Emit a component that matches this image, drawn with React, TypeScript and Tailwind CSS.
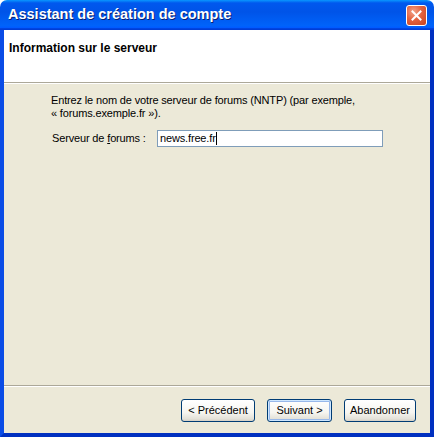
import { FC } from "react";

const XpButton: FC<{ label: string; width: string; focused?: boolean }> = ({
  label,
  width,
  focused,
}) => {
  return (
    <button
      className={`${width} h-[23px] rounded-[3px] border border-[#003c74] bg-[linear-gradient(to_bottom,#ffffff_0%,#f6f5f0_60%,#e3e1d8_90%,#d6d0c5_100%)] text-[11px] text-black flex items-center justify-center ${
        focused ? "shadow-[inset_0_0_0_1px_#cee7ff,inset_0_0_0_2px_#98b8ea]" : ""
      }`}
    >
      {label}
    </button>
  );
};

const Separator: FC = () => (
  <div className="flex flex-col">
    <div className="h-px bg-[#aca899]" />
    <div className="h-px bg-white" />
  </div>
);

export default function App() {
  return (
    <div className="w-[434px] h-[437px] flex flex-col bg-white font-['Liberation_Sans',Arial,sans-serif] text-[11px] text-black">
      {/* title bar */}
      <div className="h-[30px] shrink-0 rounded-t-[7px] bg-[linear-gradient(to_bottom,#0997ff_0%,#0058ee_10%,#0054e8_40%,#0063fa_85%,#005bff_92%,#003dd7_96%,#003dd7_100%)] flex items-center justify-between pl-[8px] pr-[7px]">
        <span className="text-white font-bold text-[14.5px] [text-shadow:1px_1px_0_#0a1f6e]">
          Assistant de création de compte
        </span>
        <div className="w-[21px] h-[21px] rounded-[3px] border border-white bg-[radial-gradient(circle_at_35%_30%,#f2a48a_0%,#e3623f_45%,#c8431f_100%)] flex items-center justify-center">
          <svg width="11" height="11" viewBox="0 0 11 11">
            <path d="M1.5 1.5 L9.5 9.5 M9.5 1.5 L1.5 9.5" stroke="white" strokeWidth="2" strokeLinecap="square" />
          </svg>
        </div>
      </div>

      {/* window frame */}
      <div className="flex-1 flex flex-col border-x-4 border-b-4 border-[#0842d6] border-l-[#0a4ce6] border-r-[#0030c0] border-b-[#0030c0]">
        {/* header */}
        <div className="h-[52px] shrink-0 bg-white pl-[5px] pt-[9px]">
          <span className="font-bold text-[12px]">Information sur le serveur</span>
        </div>
        <Separator />

        {/* body */}
        <div className="flex-1 bg-[#ece9d8] pl-[47px] pt-[10px] tracking-[-0.15px]">
          <p className="leading-[13px]">
            Entrez le nom de votre serveur de forums (NNTP) (par exemple,
            <br />« forums.exemple.fr »).
          </p>
          <div className="flex items-center mt-[10px]">
            <label className="w-[106px] pl-[1px]">
              Serveur de <span className="underline">f</span>orums :
            </label>
            <div className="w-[226px] h-[17px] border border-[#7f9db9] bg-white flex items-center pl-[2px]">
              <span>news.free.fr</span>
              <span className="w-px h-[13px] bg-black" />
            </div>
          </div>
        </div>

        <Separator />
        {/* buttons */}
        <div className="h-[46px] shrink-0 bg-[#ece9d8] flex items-start justify-end pt-[12px] pr-[14px]">
          <div className="flex gap-[12px]">
            <XpButton label="< Précédent" width="w-[74px]" />
            <XpButton label="Suivant >" width="w-[65px]" focused />
            <XpButton label="Abandonner" width="w-[72px]" />
          </div>
        </div>
      </div>
    </div>
  );
}
